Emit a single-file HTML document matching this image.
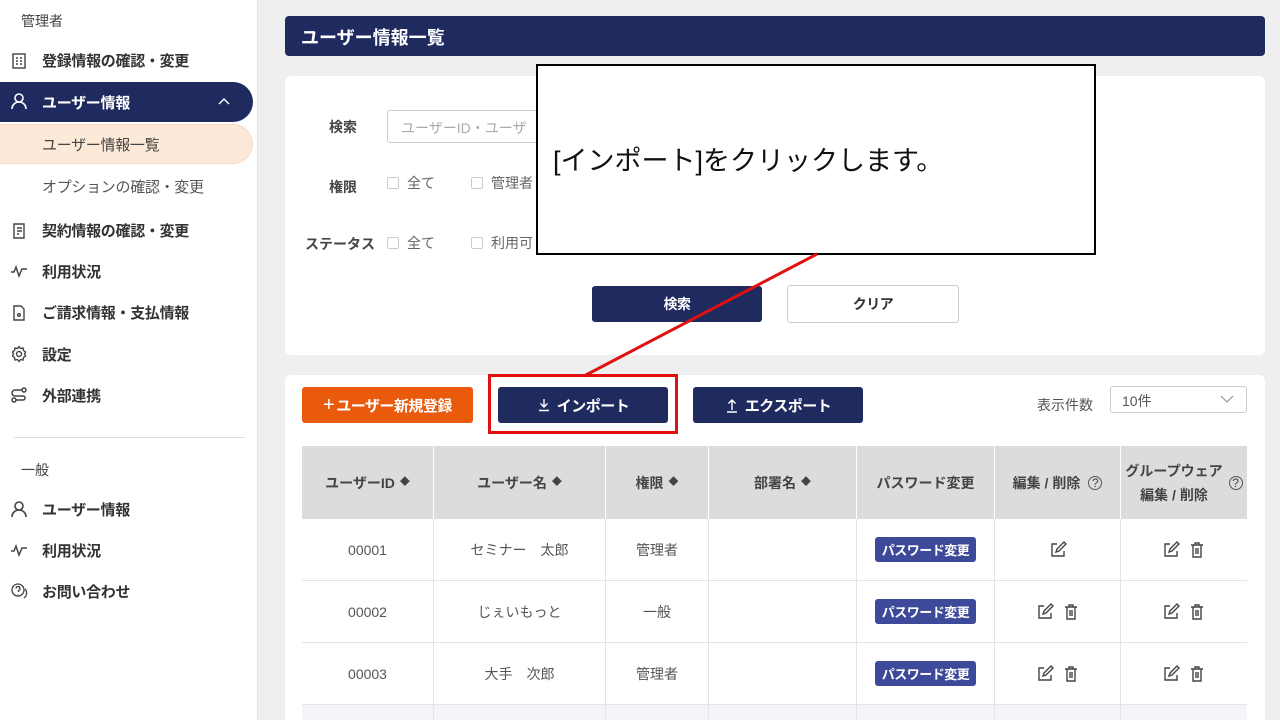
<!DOCTYPE html>
<html><head><meta charset="utf-8"><style>
*{box-sizing:border-box;margin:0;padding:0}
html,body{width:1280px;height:720px;overflow:hidden}
body{position:relative;background:#efefef;font-family:"Liberation Sans","Noto Sans CJK JP",sans-serif;color:#333}
.a{position:absolute;white-space:nowrap}
.side{position:absolute;left:0;top:0;width:258px;height:720px;background:#fff;border-right:1px solid #e2e2e2}
.si{position:absolute;left:42px;font-size:15px;font-weight:bold;color:#333;letter-spacing:-0.3px}
.ic{position:absolute;left:10px;width:18px;height:18px}
.card{position:absolute;background:#fff;border-radius:6px}
.lbl{font-size:14px;font-weight:bold;color:#444}
.cb{display:inline-block;width:12px;height:12px;border:1px solid #ccc;border-radius:2px;vertical-align:-1px;margin-right:8px}
.opt{font-size:14px;color:#666}
.btn{position:absolute;height:36px;border-radius:3px;color:#fff;font-size:15px;font-weight:bold;display:flex;align-items:center;justify-content:center;letter-spacing:-0.5px}
.th{position:absolute;top:446px;height:73px;background:#dcdcdc;border-right:1px solid #fff;display:flex;align-items:center;justify-content:center;font-size:14px;font-weight:bold;color:#444;text-align:center;line-height:24px}
.td{position:absolute;height:62px;border-right:1px solid #e4e4e4;border-bottom:1px solid #e4e4e4;display:flex;align-items:center;justify-content:center;font-size:14px;color:#555;background:#fff}
.pw{background:#3d4a9a;color:#fff;font-size:13px;font-weight:bold;padding:3px 7px;border-radius:3px;letter-spacing:-0.5px}
.sort{font-size:10px;margin-left:5px}
</style></head><body>
<div class="side">
<div class="a" style="left:21px;top:11px;font-size:14px;color:#444">管理者</div>
<svg class="ic" style="top:52px" viewBox="0 0 18 18" fill="none" stroke="#444" stroke-width="1.4"><rect x="3" y="2" width="12" height="14"/><path d="M6 6h2M10 6h2M6 9h2M10 9h2M6 12h2M10 12h2"/></svg>
<div class="si" style="top:50px">登録情報の確認・変更</div>
<div class="a" style="left:0;top:82px;width:253px;height:40px;background:#1f2a5e;border-radius:0 20px 20px 0"></div>
<svg class="ic" style="top:92px" viewBox="0 0 18 18" fill="none" stroke="#fff" stroke-width="1.6"><circle cx="9" cy="6" r="4"/><path d="M2 17c0-4 3-7 7-7s7 3 7 7"/></svg>
<div class="si" style="top:92px;color:#fff">ユーザー情報</div>
<svg class="a" style="left:217px;top:96px" width="14" height="10" viewBox="0 0 14 10" fill="none" stroke="#fff" stroke-width="1.4"><path d="M2 8l5-5 5 5"/></svg>
<div class="a" style="left:0;top:124px;width:253px;height:40px;background:#fde9d8;border-radius:0 20px 20px 0;border:1px solid #f8dcc4;border-left:none"></div>
<div class="si" style="top:134px;font-weight:normal;color:#444">ユーザー情報一覧</div>
<div class="si" style="top:176px;font-weight:normal;color:#555">オプションの確認・変更</div>
<svg class="ic" style="top:222px" viewBox="0 0 18 18" fill="none" stroke="#444" stroke-width="1.4"><path d="M4 2h10v14H4z M7 6h5M7 9h5M7 12h2"/></svg>
<div class="si" style="top:220px">契約情報の確認・変更</div>
<svg class="ic" style="top:262px" viewBox="0 0 18 18" fill="none" stroke="#444" stroke-width="1.5"><path d="M1 10h3l2-5 3 9 3-7h5"/></svg>
<div class="si" style="top:261px">利用状況</div>
<svg class="ic" style="top:304px" viewBox="0 0 18 18" fill="none" stroke="#444" stroke-width="1.4"><path d="M4 2h7l3 3v11H4z"/><circle cx="9" cy="11" r="1.3"/></svg>
<div class="si" style="top:302px">ご請求情報・支払情報</div>
<svg class="ic" style="top:345px" viewBox="0 0 18 18" fill="none" stroke="#444" stroke-width="1.4"><circle cx="9" cy="9" r="2.5"/><path d="M9 1.5l1.5 2 2.5-.5.5 2.5 2 1.5-1 2 1 2-2 1.5-.5 2.5-2.5-.5L9 16.5l-1.5-2-2.5.5-.5-2.5-2-1.5 1-2-1-2 2-1.5.5-2.5 2.5.5z"/></svg>
<div class="si" style="top:344px">設定</div>
<svg class="ic" style="top:386px" viewBox="0 0 18 18" fill="none" stroke="#444" stroke-width="1.5"><circle cx="14" cy="4" r="2"/><circle cx="4" cy="14" r="2"/><path d="M12 4H5a3 3 0 0 0 0 6h8a2 2 0 0 1 0 4H6"/></svg>
<div class="si" style="top:385px">外部連携</div>
<div class="a" style="left:14px;top:437px;width:231px;height:1px;background:#ddd"></div>
<div class="a" style="left:21px;top:460px;font-size:14px;color:#444">一般</div>
<svg class="ic" style="top:500px" viewBox="0 0 18 18" fill="none" stroke="#444" stroke-width="1.6"><circle cx="9" cy="6" r="4"/><path d="M2 17c0-4 3-7 7-7s7 3 7 7"/></svg>
<div class="si" style="top:499px">ユーザー情報</div>
<svg class="ic" style="top:541px" viewBox="0 0 18 18" fill="none" stroke="#444" stroke-width="1.5"><path d="M1 10h3l2-5 3 9 3-7h5"/></svg>
<div class="si" style="top:540px">利用状況</div>
<svg class="ic" style="top:582px" viewBox="0 0 18 18" fill="none" stroke="#444" stroke-width="1.3"><circle cx="8" cy="8" r="6"/><path d="M6 6.5a2 2 0 1 1 2.5 2v1.5M8 12v.5M15 7a6 6 0 0 1-1 9"/></svg>
<div class="si" style="top:581px">お問い合わせ</div>
</div>

<div class="a" style="left:285px;top:16px;width:980px;height:40px;background:#1f2a5e;border-radius:4px;color:#fff;font-size:18px;font-weight:bold;padding:8px 0 0 16px">ユーザー情報一覧</div>

<div class="card" style="left:285px;top:76px;width:980px;height:279px"></div>
<div class="a lbl" style="left:329px;top:117px">検索</div>
<div class="a" style="left:387px;top:110px;width:200px;height:33px;border:1px solid #ccc;border-radius:3px;font-size:14px;color:#aaa;padding:7px 13px">ユーザーID・ユーザ</div>
<div class="a lbl" style="left:329px;top:177px">権限</div>
<div class="a opt" style="left:387px;top:173px"><span class="cb"></span>全て</div>
<div class="a opt" style="left:471px;top:173px"><span class="cb"></span>管理者</div>
<div class="a lbl" style="left:305px;top:234px">ステータス</div>
<div class="a opt" style="left:387px;top:233px"><span class="cb"></span>全て</div>
<div class="a opt" style="left:471px;top:233px"><span class="cb"></span>利用可</div>
<div class="btn" style="left:592px;top:286px;width:170px;background:#1f2a5e;font-size:14px">検索</div>
<div class="btn" style="left:787px;top:285px;width:172px;height:38px;background:#fff;border:1px solid #ccc;color:#333;font-size:14px">クリア</div>

<div class="card" style="left:285px;top:375px;width:980px;height:345px;border-radius:6px 6px 0 0"></div>
<div class="btn" style="left:302px;top:387px;width:171px;background:#ea5a0c"><span style="font-size:20px;font-weight:normal;margin-right:2px">+</span>ユーザー新規登録</div>
<div class="btn" style="left:498px;top:387px;width:170px;background:#1f2a5e"><svg width="14" height="14" viewBox="0 0 14 14" fill="none" stroke="#fff" stroke-width="1.4" style="margin-right:6px"><path d="M7 1v8M3.5 5.5L7 9l3.5-3.5M2 12.5h10"/></svg>インポート</div>
<div class="a" style="left:488px;top:374px;width:190px;height:60px;border:3px solid #e01010"></div>
<div class="btn" style="left:693px;top:387px;width:170px;background:#1f2a5e"><svg width="14" height="16" viewBox="0 0 14 16" fill="none" stroke="#fff" stroke-width="1.4" style="margin-right:6px"><path d="M7 13V3M3.5 6.5L7 3l3.5 3.5M2 15h10"/></svg>エクスポート</div>
<div class="a" style="left:1037px;top:395px;font-size:14px;color:#555">表示件数</div>
<div class="a" style="left:1110px;top:386px;width:137px;height:27px;border:1px solid #ccc;border-radius:3px;font-size:14px;color:#555;padding:4px 11px">10件</div>
<svg class="a" style="left:1220px;top:395px" width="14" height="9" viewBox="0 0 14 9" fill="none" stroke="#999" stroke-width="1.2"><path d="M1 1l6 6 6-6"/></svg>

<div class="th" style="left:302px;width:132px">ユーザーID<span class="sort">◆</span></div>
<div class="th" style="left:434px;width:172px">ユーザー名<span class="sort">◆</span></div>
<div class="th" style="left:606px;width:103px">権限<span class="sort">◆</span></div>
<div class="th" style="left:709px;width:148px">部署名<span class="sort">◆</span></div>
<div class="th" style="left:857px;width:138px">パスワード変更</div>
<div class="th" style="left:995px;width:126px">編集 / 削除 <span style="margin-left:8px;font-weight:normal;font-size:12px;border:1px solid #555;border-radius:50%;width:14px;height:14px;line-height:12px;display:inline-block">?</span></div>
<div class="th" style="left:1121px;width:126px;border-right:none">グループウェア<br>編集 / 削除 <span style="margin-left:6px;font-weight:normal;font-size:12px;border:1px solid #555;border-radius:50%;width:14px;height:14px;line-height:12px;display:inline-block">?</span></div>

<svg width="0" height="0" style="position:absolute"><defs>
<symbol id="ed" viewBox="0 0 18 18"><path d="M8 3H3v12h12v-5M7 11l1-3 7-7 2 2-7 7z" fill="none" stroke="#444" stroke-width="1.4"/></symbol>
<symbol id="tr" viewBox="0 0 18 18"><path d="M3 4h12M7 4V2h4v2M5 4v12h8V4M8 7v6M10 7v6" fill="none" stroke="#444" stroke-width="1.4"/></symbol>
</defs></svg>

<div class="td" style="left:302px;top:519px;width:132px">00001</div>
<div class="td" style="left:434px;top:519px;width:172px">セミナー　太郎</div>
<div class="td" style="left:606px;top:519px;width:103px">管理者</div>
<div class="td" style="left:709px;top:519px;width:148px"></div>
<div class="td" style="left:857px;top:519px;width:138px"><span class="pw">パスワード変更</span></div>
<div class="td" style="left:995px;top:519px;width:126px"><svg width="18" height="18"><use href="#ed"/></svg></div>
<div class="td" style="left:1121px;top:519px;width:126px;border-right:none"><svg width="18" height="18"><use href="#ed"/></svg><svg width="18" height="18" style="margin-left:8px"><use href="#tr"/></svg></div>

<div class="td" style="left:302px;top:581px;width:132px">00002</div>
<div class="td" style="left:434px;top:581px;width:172px">じぇいもっと</div>
<div class="td" style="left:606px;top:581px;width:103px">一般</div>
<div class="td" style="left:709px;top:581px;width:148px"></div>
<div class="td" style="left:857px;top:581px;width:138px"><span class="pw">パスワード変更</span></div>
<div class="td" style="left:995px;top:581px;width:126px"><svg width="18" height="18"><use href="#ed"/></svg><svg width="18" height="18" style="margin-left:8px"><use href="#tr"/></svg></div>
<div class="td" style="left:1121px;top:581px;width:126px;border-right:none"><svg width="18" height="18"><use href="#ed"/></svg><svg width="18" height="18" style="margin-left:8px"><use href="#tr"/></svg></div>

<div class="td" style="left:302px;top:643px;width:132px">00003</div>
<div class="td" style="left:434px;top:643px;width:172px">大手　次郎</div>
<div class="td" style="left:606px;top:643px;width:103px">管理者</div>
<div class="td" style="left:709px;top:643px;width:148px"></div>
<div class="td" style="left:857px;top:643px;width:138px"><span class="pw">パスワード変更</span></div>
<div class="td" style="left:995px;top:643px;width:126px"><svg width="18" height="18"><use href="#ed"/></svg><svg width="18" height="18" style="margin-left:8px"><use href="#tr"/></svg></div>
<div class="td" style="left:1121px;top:643px;width:126px;border-right:none"><svg width="18" height="18"><use href="#ed"/></svg><svg width="18" height="18" style="margin-left:8px"><use href="#tr"/></svg></div>

<div class="td" style="left:302px;top:705px;width:132px;height:15px;background:#f4f5f9;border-bottom:none"></div>
<div class="td" style="left:434px;top:705px;width:172px;height:15px;background:#f4f5f9;border-bottom:none"></div>
<div class="td" style="left:606px;top:705px;width:103px;height:15px;background:#f4f5f9;border-bottom:none"></div>
<div class="td" style="left:709px;top:705px;width:148px;height:15px;background:#f4f5f9;border-bottom:none"></div>
<div class="td" style="left:857px;top:705px;width:138px;height:15px;background:#f4f5f9;border-bottom:none"></div>
<div class="td" style="left:995px;top:705px;width:126px;height:15px;background:#f4f5f9;border-bottom:none"></div>
<div class="td" style="left:1121px;top:705px;width:126px;height:15px;background:#f4f5f9;border:none"></div>

<div class="a" style="left:536px;top:64px;width:560px;height:191px;background:#fff;border:2px solid #000"></div>
<div class="a" style="left:553px;top:139px;font-size:27px;color:#111">[インポート]をクリックします。</div>
<svg class="a" style="left:0;top:0" width="1280" height="720"><line x1="817" y1="254" x2="584" y2="376" stroke="#e01010" stroke-width="3"/></svg>
</body></html>
